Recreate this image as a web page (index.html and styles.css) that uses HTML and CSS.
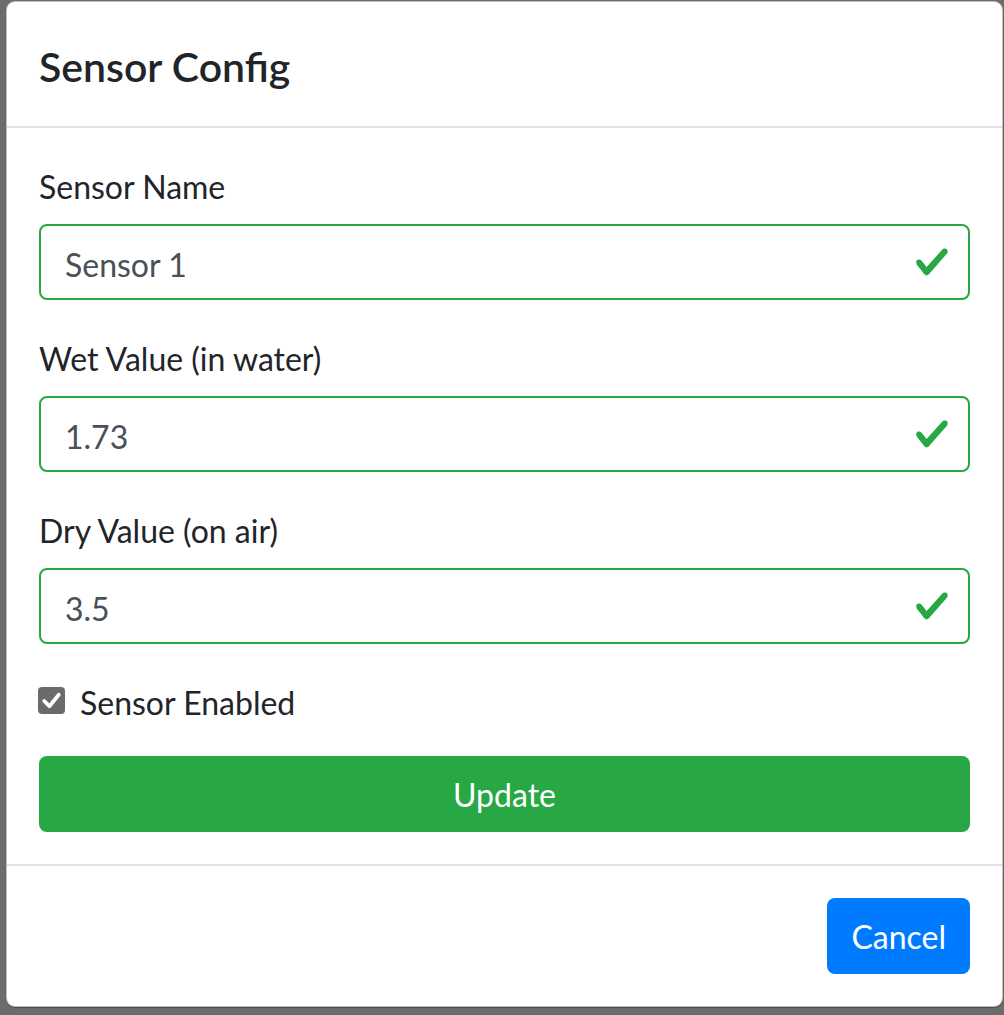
FILE: index.html
```html
<!DOCTYPE html>
<html lang="en">
<head>
<meta charset="utf-8">
<title>Sensor Config</title>
<link rel="stylesheet" href="styles.css">
</head>
<body>
<div class="modal">
  <div class="modal-header">
    <h5 class="modal-title">Sensor Config</h5>
  </div>
  <div class="modal-body">
    <div class="form-group">
      <label class="form-label">Sensor Name</label>
      <div class="form-control is-valid">
        <span class="value">Sensor 1</span>
        <svg class="valid-icon" viewBox="0 0 8 8"><path fill="#28a745" d="M2.3 6.73L.6 4.53c-.4-1.04.46-1.4 1.1-.8l1.1 1.4 3.4-3.8c.6-.63 1.6-.27 1.2.7l-4 4.6c-.43.5-.8.4-1.1.1z"/></svg>
      </div>
    </div>
    <div class="form-group">
      <label class="form-label">Wet Value (in water)</label>
      <div class="form-control is-valid">
        <span class="value">1.73</span>
        <svg class="valid-icon" viewBox="0 0 8 8"><path fill="#28a745" d="M2.3 6.73L.6 4.53c-.4-1.04.46-1.4 1.1-.8l1.1 1.4 3.4-3.8c.6-.63 1.6-.27 1.2.7l-4 4.6c-.43.5-.8.4-1.1.1z"/></svg>
      </div>
    </div>
    <div class="form-group">
      <label class="form-label">Dry Value (on air)</label>
      <div class="form-control is-valid">
        <span class="value">3.5</span>
        <svg class="valid-icon" viewBox="0 0 8 8"><path fill="#28a745" d="M2.3 6.73L.6 4.53c-.4-1.04.46-1.4 1.1-.8l1.1 1.4 3.4-3.8c.6-.63 1.6-.27 1.2.7l-4 4.6c-.43.5-.8.4-1.1.1z"/></svg>
      </div>
    </div>
    <div class="form-group form-check">
      <span class="check-box">
        <svg viewBox="0 0 26 26"><path d="M6 13.5 L11 18.5 L20 7.5" fill="none" stroke="#fff" stroke-width="3.6" stroke-linecap="round" stroke-linejoin="round"/></svg>
      </span>
      <span class="check-label">Sensor Enabled</span>
    </div>
    <div class="btn btn-success btn-block">Update</div>
  </div>
  <div class="modal-footer">
    <div class="btn btn-primary">Cancel</div>
  </div>
</div>
</body>
</html>
```

FILE: styles.css
```css
html, body {
  margin: 0;
  padding: 0;
}
body {
  background: #6c6c6c;
  font-family: "Lato", "Open Sans", sans-serif;
  color: #212529;
  height: 1015px;
  overflow: hidden;
}
.modal {
  margin: 1px 0 0 6px;
  width: 997px;
  box-sizing: border-box;
  background: #fff;
  border: 1px solid rgba(0, 0, 0, 0.25);
  border-radius: 9px;
  box-shadow: 0 1px 1px rgba(0, 0, 0, 0.3);
}
.modal-header {
  padding: 32px;
  border-bottom: 2px solid #dee2e6;
}
.modal-title {
  margin: 0;
  font-size: 41px;
  line-height: 54px;
  padding-top: 6px;
  font-weight: 600;
}
.modal-body {
  padding: 32px;
  display: flex;
  flex-direction: column;
}
.form-group {
  margin-bottom: 32px;
  display: flex;
  flex-direction: column;
}
.form-label {
  font-size: 32px;
  line-height: 42px;
  padding-top: 6px;
  margin-bottom: 16px;
}
.form-control {
  height: 76px;
  box-sizing: border-box;
  border: 2px solid #ced4da;
  border-radius: 8px;
  padding: 12px 18px 12px 24px;
  font-size: 32px;
  line-height: 48px;
  color: #495057;
  display: flex;
  align-items: center;
  justify-content: space-between;
}
.form-control .value {
  padding-top: 5px;
}
.form-control.is-valid {
  border-color: #28a745;
}
.valid-icon {
  width: 36px;
  height: 36px;
}
.form-check {
  flex-direction: row;
  align-items: center;
  height: 48px;
}
.check-box {
  width: 27px;
  height: 27px;
  border-radius: 4px;
  background: #6b6b6b;
  margin-left: -1px;
  margin-right: 15px;
  display: flex;
}
.check-box svg {
  width: 27px;
  height: 27px;
}
.check-label {
  font-size: 32px;
  line-height: 42px;
  padding-top: 5px;
}
.btn {
  box-sizing: border-box;
  height: 76px;
  border-radius: 8px;
  padding: 15px 24px 9px;
  font-size: 32px;
  line-height: 48px;
  color: #fff;
  text-align: center;
}
.btn-success {
  background: #28a745;
}
.btn-primary {
  background: #007bff;
}
.modal-footer {
  border-top: 2px solid #dee2e6;
  padding: 24px;
  display: flex;
  justify-content: flex-end;
}
.modal-footer .btn {
  margin: 8px;
}
```
